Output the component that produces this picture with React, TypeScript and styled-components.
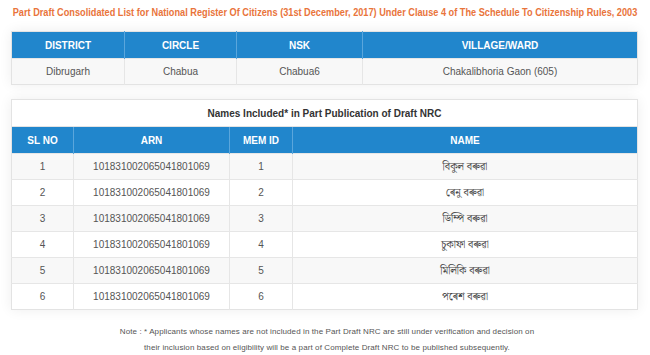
import React from "react";
import styled, { createGlobalStyle } from "styled-components";

const GlobalStyle = createGlobalStyle`
  html, body { margin: 0; padding: 0; background: #ffffff; }
  body { font-family: "Liberation Sans", Arial, sans-serif; }
`;

const Page = styled.div`
  width: 650px;
  height: 355px;
  overflow: hidden;
  padding-top: 6px;
  box-sizing: border-box;
`;

const TitleBar = styled.div`
  display: flex;
  justify-content: center;
  height: 13px;
`;

const Title = styled.h1`
  margin: 0;
  flex: none;
  font-size: 11px;
  line-height: 13px;
  font-weight: bold;
  color: #e9743b;
  white-space: nowrap;
  transform: scaleX(0.835);
  transform-origin: center;
`;

const Card = styled.div<{ $top: number }>`
  margin: ${(p) => p.$top}px 0 0 11px;
  width: 627px;
  box-shadow: 0 0 12px rgba(0, 0, 0, 0.07);
`;

const Table = styled.table`
  width: 100%;
  border-collapse: collapse;
  table-layout: fixed;
  border: 1px solid #e3e3e3;
`;

const Caption = styled.th`
  height: 26px;
  padding: 0;
  background: #ffffff;
  color: #333333;
  font-size: 10px;
  font-weight: bold;
  text-align: center;
  border-bottom: 1px solid #e3e3e3;
`;

const Head = styled.th`
  height: 26px;
  padding: 0;
  background: #2186cc;
  color: #ffffff;
  font-size: 10px;
  font-weight: bold;
  text-align: center;
  border-left: 1px solid #5aa6dc;
  &:first-child { border-left: none; }
`;

const Cell = styled.td<{ $shade: boolean }>`
  height: 25px;
  padding: 0;
  background: ${(p) => (p.$shade ? "#f8f8f8" : "#ffffff")};
  color: #555555;
  font-size: 10px;
  text-align: center;
  border-top: 1px solid #e6e6e6;
  border-left: 1px solid #e6e6e6;
  &:first-child { border-left: none; }
`;

const NameCell = styled(Cell)`
  font-family: "Noto Serif Bengali", "Noto Sans Bengali", "Lohit Assamese", "Lohit Bengali", "FreeSerif", "Liberation Sans", sans-serif;
  font-size: 10.5px;
  color: #444444;
`;

const Note = styled.p`
  margin: 14px 0 0 0;
  padding-left: 4px;
  text-align: center;
  font-size: 8px;
  line-height: 16px;
  letter-spacing: 0.1px;
  color: #555555;
`;

const rows = [
  { sl: 1, name: "বিকুল বৰুৱা" },
  { sl: 2, name: "ৰেনু বৰুৱা" },
  { sl: 3, name: "ডিম্পি বৰুৱা" },
  { sl: 4, name: "চুকাফা বৰুৱা" },
  { sl: 5, name: "মিলিকি বৰুৱা" },
  { sl: 6, name: "পৰেশ বৰুৱা" },
];

export default function App() {
  return (
    <Page>
      <GlobalStyle />
      <TitleBar>
        <Title>
          Part Draft Consolidated List for National Register Of Citizens (31st December, 2017) Under Clause 4 of The
          Schedule To Citizenship Rules, 2003
        </Title>
      </TitleBar>

      <Card $top={12}>
        <Table>
          <colgroup>
            <col style={{ width: 113 }} />
            <col style={{ width: 112 }} />
            <col style={{ width: 126 }} />
            <col />
          </colgroup>
          <thead>
            <tr>
              <Head>DISTRICT</Head>
              <Head>CIRCLE</Head>
              <Head>NSK</Head>
              <Head>VILLAGE/WARD</Head>
            </tr>
          </thead>
          <tbody>
            <tr>
              <Cell $shade>Dibrugarh</Cell>
              <Cell $shade>Chabua</Cell>
              <Cell $shade>Chabua6</Cell>
              <Cell $shade>Chakalibhoria Gaon (605)</Cell>
            </tr>
          </tbody>
        </Table>
      </Card>

      <Card $top={14}>
        <Table>
          <colgroup>
            <col style={{ width: 62 }} />
            <col style={{ width: 156 }} />
            <col style={{ width: 63 }} />
            <col />
          </colgroup>
          <thead>
            <tr>
              <Caption colSpan={4}>Names Included* in Part Publication of Draft NRC</Caption>
            </tr>
            <tr>
              <Head>SL NO</Head>
              <Head>ARN</Head>
              <Head>MEM ID</Head>
              <Head>NAME</Head>
            </tr>
          </thead>
          <tbody>
            {rows.map((r, i) => (
              <tr key={r.sl}>
                <Cell $shade={i % 2 === 0}>{r.sl}</Cell>
                <Cell $shade={i % 2 === 0}>101831002065041801069</Cell>
                <Cell $shade={i % 2 === 0}>{r.sl}</Cell>
                <NameCell $shade={i % 2 === 0}>{r.name}</NameCell>
              </tr>
            ))}
          </tbody>
        </Table>
      </Card>

      <Note>
        Note : * Applicants whose names are not included in the Part Draft NRC are still under verification and decision on
        <br />
        their inclusion based on eligibility will be a part of Complete Draft NRC to be published subsequently.
      </Note>
    </Page>
  );
}
